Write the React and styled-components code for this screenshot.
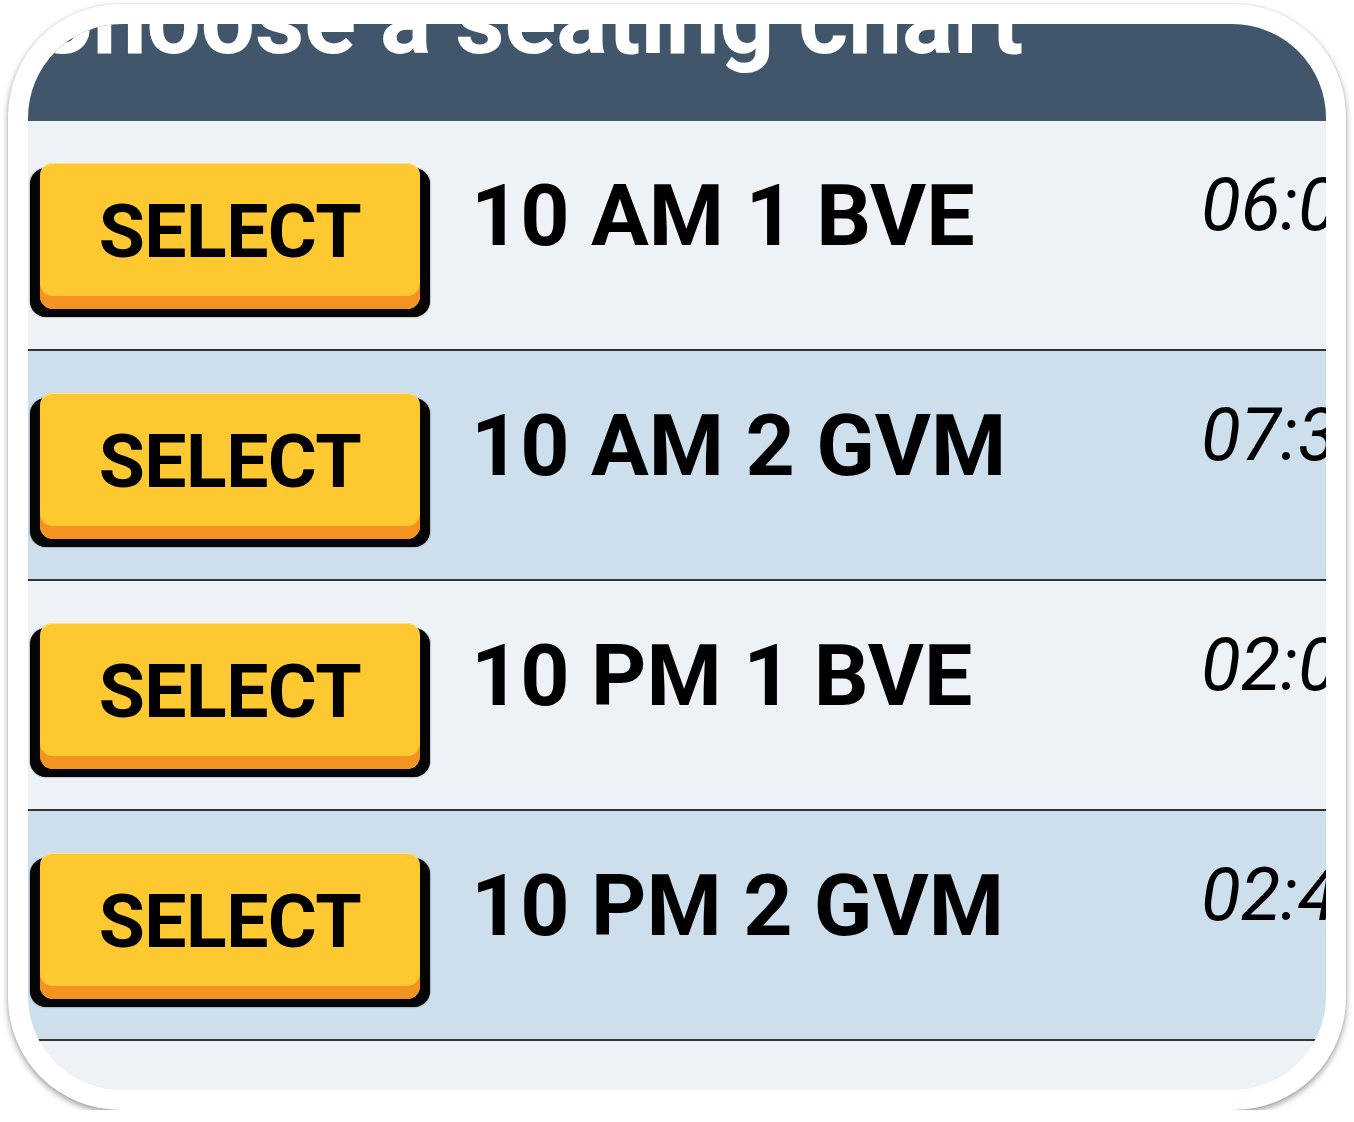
import React from "react";
import styled, { createGlobalStyle } from "styled-components";

const Global = createGlobalStyle`
  html, body { margin: 0; padding: 0; background: #ffffff; }
  body { font-family: Roboto, "Liberation Sans", sans-serif; }
`;

const Frame = styled.div`
  margin: 4px 8px 0 8px;
  width: 1338px;
  height: 1106px;
  box-sizing: border-box;
  padding: 20px;
  background: #ffffff;
  border-radius: 112px;
  box-shadow: 0 3px 6px rgba(0, 0, 0, 0.38), 0 0 2px rgba(0, 0, 0, 0.12);
`;

const Screen = styled.div`
  height: 1066px;
  border-radius: 94px;
  overflow: hidden;
  background: #edf2f7;
  display: flex;
  flex-direction: column;
`;

const Header = styled.div`
  height: 97px;
  flex: none;
  background: #41566a;
  overflow: hidden;
`;

const Title = styled.h1`
  margin: -52px 0 0 2px;
  font-family: Roboto, "Liberation Sans", sans-serif;
  font-weight: 700;
  font-size: 96px;
  line-height: 1;
  color: #ffffff;
  white-space: nowrap;
`;

const Row = styled.div`
  height: 230px;
  flex: none;
  box-sizing: border-box;
  border-bottom: 2px solid #333333;
  background: ${(p) => (p.$alt ? "#cddfed" : "#edf2f7")};
  display: grid;
  grid-template-columns: 400px 1fr 125px;
  column-gap: 41px;
  align-items: start;
  padding-left: 2px;
`;

const Shell = styled.div`
  margin-top: 47px;
  background: #050505;
  border-radius: 16px;
  padding: 0 10px 8px 10px;
  box-shadow: 0 0 1.5px rgba(0, 0, 0, 0.8);
`;

const Face = styled.button`
  display: flex;
  align-items: center;
  justify-content: center;
  width: 100%;
  height: 146px;
  margin-top: -5px;
  padding: 0 0 10px 0;
  box-sizing: border-box;
  border: none;
  border-radius: 13px;
  background: #fdc830;
  box-shadow: inset 0 -13px 0 #f4931f, inset 0 1px 0 #fde08a;
  font-family: Roboto, "Liberation Sans", sans-serif;
  font-weight: 700;
  font-size: 75px;
  line-height: 1;
  color: #000000;
  letter-spacing: -0.5px;
  cursor: pointer;
`;

const Name = styled.div`
  margin-top: 52px;
  font-family: Roboto, "Liberation Sans", sans-serif;
  font-weight: 700;
  font-size: 86px;
  line-height: 1;
  color: #000000;
  white-space: nowrap;
`;

const Time = styled.div`
  margin-top: 48px;
  font-family: Roboto, "Liberation Sans", sans-serif;
  font-style: italic;
  font-weight: 400;
  font-size: 73px;
  line-height: 1;
  color: #000000;
  white-space: nowrap;
`;

const Tail = styled.div`
  flex: 1;
  background: #edf2f7;
`;

const charts = [
  { name: "10 AM 1 BVE", time: "06:00 PM" },
  { name: "10 AM 2 GVM", time: "07:30 PM" },
  { name: "10 PM 1 BVE", time: "02:00 AM" },
  { name: "10 PM 2 GVM", time: "02:45 AM" },
];

export default function App() {
  return (
    <>
      <Global />
      <Frame>
        <Screen>
          <Header>
            <Title>Choose a seating chart</Title>
          </Header>
          {charts.map((c, i) => (
            <Row key={c.name} $alt={i % 2 === 1}>
              <Shell>
                <Face>SELECT</Face>
              </Shell>
              <Name>{c.name}</Name>
              <Time>{c.time}</Time>
            </Row>
          ))}
          <Tail />
        </Screen>
      </Frame>
    </>
  );
}
